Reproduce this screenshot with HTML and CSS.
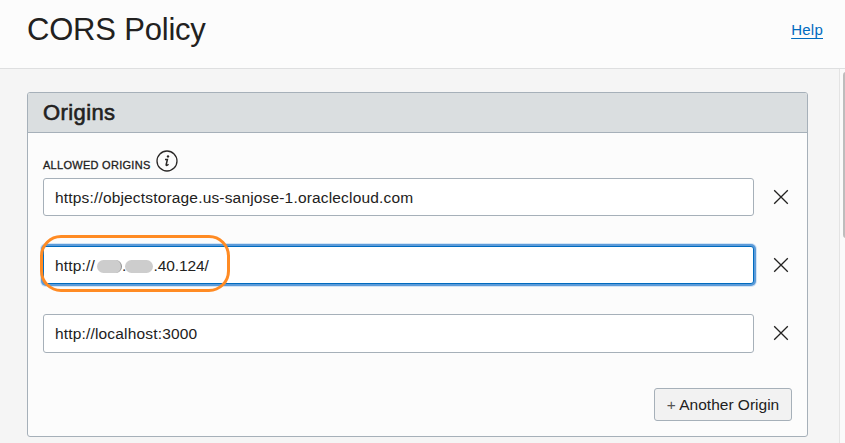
FILE: index.html
```
<!DOCTYPE html>
<html lang="en">
<head>
<meta charset="utf-8">
<title>CORS Policy</title>
<link rel="stylesheet" href="styles.css">
</head>
<body>
<header class="top">
  <h1>CORS Policy</h1>
  <a class="help" href="#">Help</a>
</header>
<main class="content">
  <section class="panel">
    <h2>Origins</h2>
    <div class="body">
      <div class="label"><span>ALLOWED ORIGINS</span>
        <svg width="22" height="22" viewBox="0 0 22 22" fill="none" stroke="#2a2827"><circle cx="11" cy="11" r="10" stroke-width="1.3"/><circle cx="12" cy="6.4" r="1.2" fill="#2a2827" stroke="none"/><path d="M9 9.5h2.4l-1.2 5c-.3 1.2.7 1.3 2.3-.3" stroke-width="1.5"/></svg>
      </div>
      <div class="row">
        <div class="field">https://objectstorage.us-sanjose-1.oraclecloud.com</div>
        <svg class="close" width="16" height="16" viewBox="0 0 16 16"><path d="M1.2 1.2l13.6 13.6M14.8 1.2L1.2 14.8"/></svg>
      </div>
      <div class="row">
        <div class="field focused">http://<span class="mask first"></span>.<span class="mask second"></span><span class="tail">.40.124/</span><span class="marker"></span></div>
        <svg class="close" width="16" height="16" viewBox="0 0 16 16"><path d="M1.2 1.2l13.6 13.6M14.8 1.2L1.2 14.8"/></svg>
      </div>
      <div class="row">
        <div class="field tall">http://localhost:3000</div>
        <svg class="close" width="16" height="16" viewBox="0 0 16 16"><path d="M1.2 1.2l13.6 13.6M14.8 1.2L1.2 14.8"/></svg>
      </div>
      <div class="actions"><button><span class="plus">+</span> Another Origin</button></div>
    </div>
  </section>
  <div class="track"><div class="thumb"></div></div>
</main>
</body>
</html>
```
FILE: styles.css
```
* { box-sizing: border-box; }
body {
  margin: 0;
  height: 443px;
  overflow: hidden;
  background: #f5f5f5;
  color: #222120;
  font: 15px/20px "Liberation Sans", Arial, sans-serif;
}
.top {
  height: 69px;
  padding: 0 22px 0 26px;
  display: flex;
  justify-content: space-between;
  background: #fcfcfc;
  border-bottom: 1px solid #dedfe0;
}
h1 { margin: 11px 0 0 1px; font-size: 31px; line-height: 38px; font-weight: 400; letter-spacing: -.2px; }
.help { margin-top: 20px; color: #006bbf; text-decoration: underline; text-underline-offset: 3px; letter-spacing: .25px; }
.content { height: 374px; display: flex; justify-content: space-between; }
.panel {
  width: 781px;
  height: 345px;
  margin: 23px 0 0 27px;
  border: 1px solid #a6b0b9;
  border-radius: 3px;
  background: #fcfcfc;
}
h2 {
  margin: 0;
  height: 40px;
  padding-left: 15px;
  background: #dadee0;
  border-bottom: 1px solid #a6b0b9;
  border-radius: 2px 2px 0 0;
  font-size: 22px;
  line-height: 39px;
  font-weight: 400;
  letter-spacing: .4px;
  -webkit-text-stroke: .6px #222120;
}
.body { padding: 17px 15px 0; }
.label {
  height: 28px;
  display: flex;
  gap: 5px;
  font-size: 11px;
  line-height: 30px;
  letter-spacing: .28px;
  -webkit-text-stroke: .3px #222120;
}
.row { height: 68px; display: flex; }
.field {
  position: relative;
  width: 711px;
  height: 38px;
  padding-left: 11px;
  background: #fff;
  border: 1px solid #a6b0b9;
  border-radius: 3px;
  font-size: 15.5px;
  line-height: 37px;
  letter-spacing: .17px;
  white-space: pre;
}
.tall { height: 39px; }
.focused { border-color: #006bbf; box-shadow: 0 0 0 2px #5c9bd9, 0 0 0 3px #d3e4f5; }
.mask { display: inline-block; height: 13px; border-radius: 7px; background: #cdcdcd; vertical-align: -2px; }
.first { width: 25px; margin-left: 2px; border-right: 1px solid #8f8f8f; }
.second { width: 28px; margin-left: -1px; }
.tail { letter-spacing: -.1px; }
.marker {
  position: absolute;
  left: -4px;
  top: -12px;
  width: 190px;
  height: 57px;
  border: 3px solid #ff8b24;
  border-radius: 21px;
}
.close { margin: 11px 0 0 19px; fill: none; stroke: #222120; stroke-width: 1.3; }
.actions { display: flex; justify-content: flex-end; margin-top: 6px; }
button {
  width: 138px;
  height: 33px;
  padding: 0;
  border: 1px solid #a6b0b9;
  border-radius: 3px;
  background: #f2f2f2;
  color: #222120;
  font: inherit;
  font-size: 15.5px;
  white-space: nowrap;
}
.plus { color: #555; }
.track { width: 6px; border-left: 1px solid #e3e3e3; background: #fafafa; padding: 3px 0 0 3px; }
.thumb { width: 6px; height: 166px; border-radius: 4px; background: #bdbdbd; }
```
